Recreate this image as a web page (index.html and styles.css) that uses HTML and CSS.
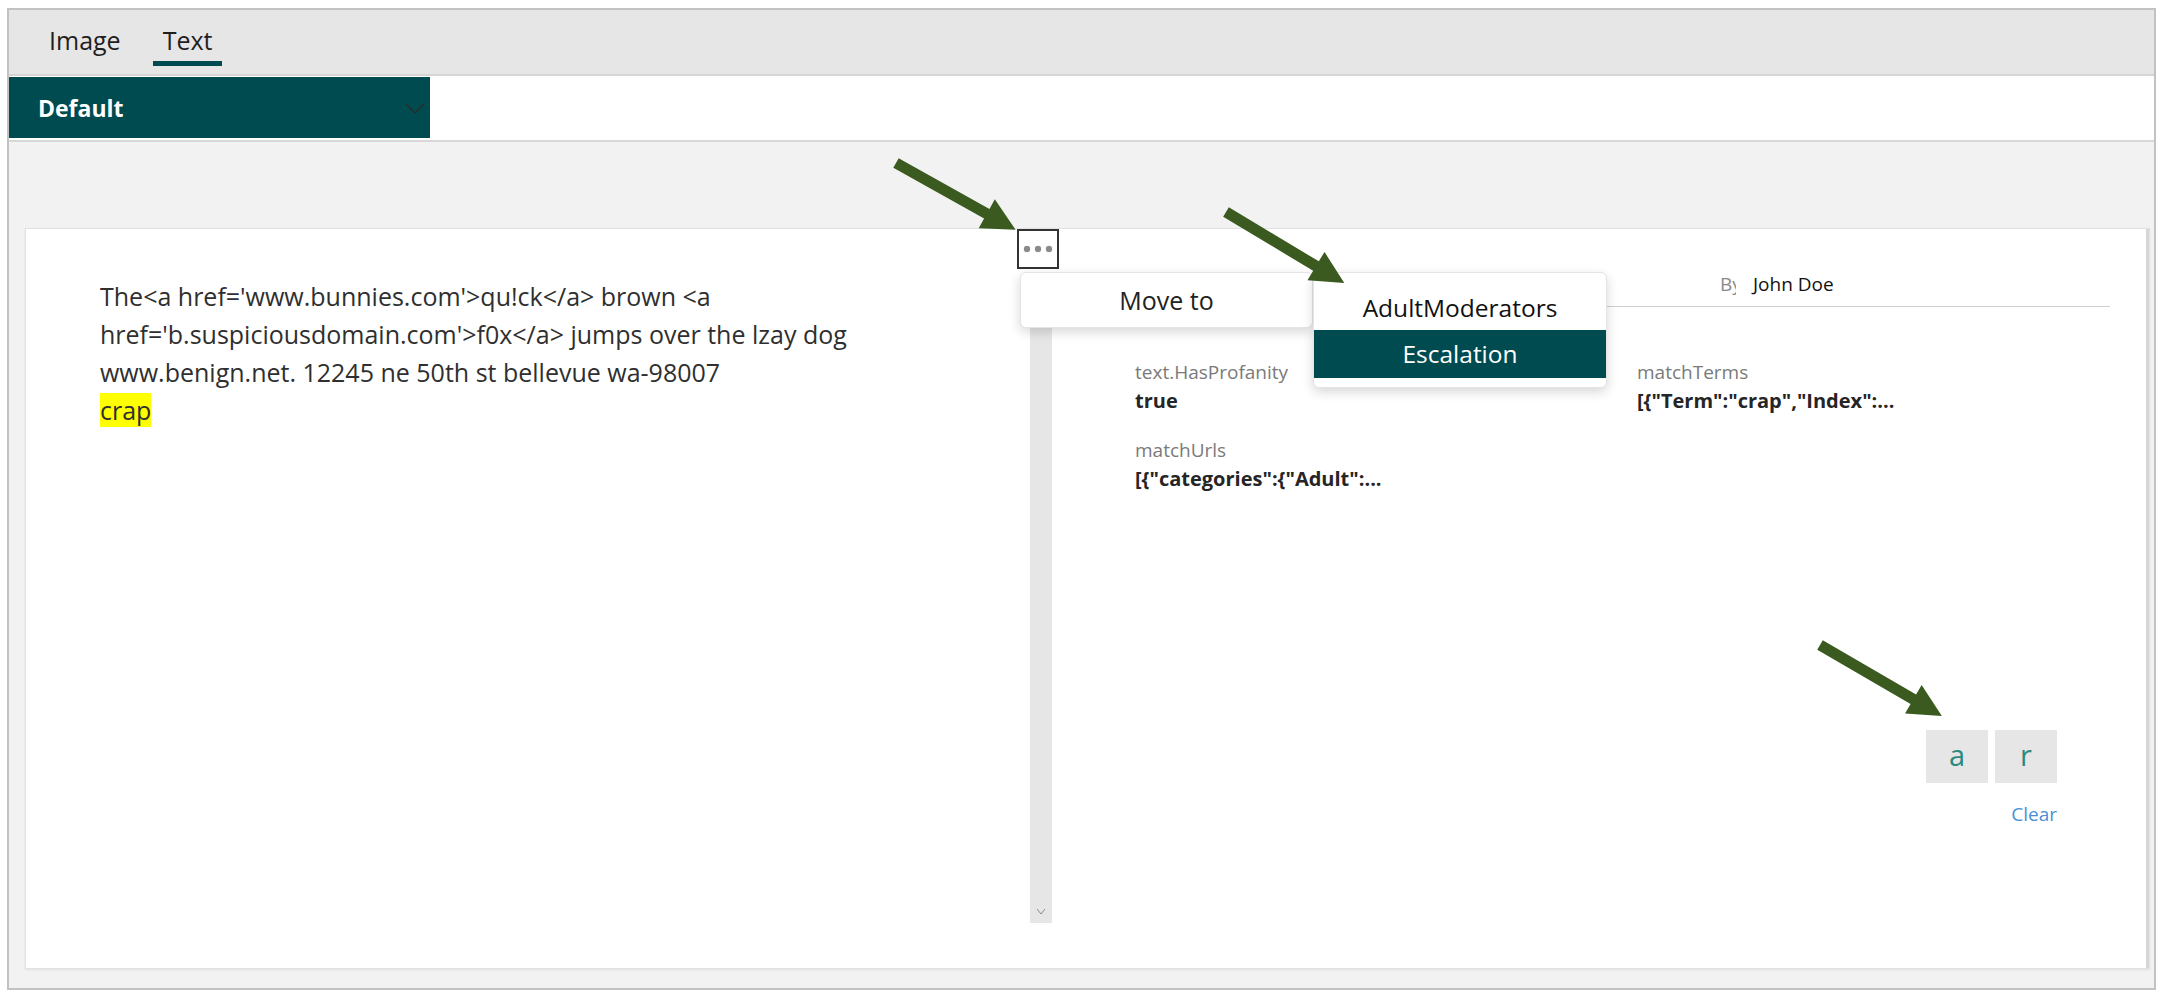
FILE: index.html
```html
<!DOCTYPE html>
<html lang="en">
<head>
<meta charset="utf-8">
<title>Review - Text</title>
<link rel="stylesheet" href="styles.css">
</head>
<body>
<div class="frame">
  <div class="tabs">
    <div class="tab">Image</div>
    <div class="tab active">Text</div>
  </div>
  <div class="filter-row">
    <div class="dropdown">
      <span class="dropdown-label">Default</span>
      <svg class="dropdown-chevron" width="20" height="11" viewBox="0 0 20 11"><polyline points="1,1 10,10 19,1" fill="none" stroke="#2a2a2a" stroke-width="1.3"/></svg>
    </div>
  </div>
  <div class="content">
    <div class="card">
      <div class="text-pane">
        <p class="doc">The&lt;a href='www.bunnies.com'&gt;qu!ck&lt;/a&gt; brown &lt;a<br>href='b.suspiciousdomain.com'&gt;f0x&lt;/a&gt; jumps over the lzay dog<br>www.benign.net. 12245 ne 50th st bellevue wa-98007<br><mark class="hl">crap</mark></p>
      </div>
      <div class="scrollbar">
        <svg class="scroll-chevron" width="10" height="7" viewBox="0 0 10 7"><polyline points="1,1 5,6 9,1" fill="none" stroke="#8a8a8a" stroke-width="1"/></svg>
      </div>
      <div class="detail-pane">
        <div class="detail-header">
          <span class="by">By</span><span class="author">John Doe</span>
        </div>
        <div class="fields">
          <div class="field">
            <div class="field-label">text.HasProfanity</div>
            <div class="field-value">true</div>
          </div>
          <div class="field">
            <div class="field-label">matchTerms</div>
            <div class="field-value">[{"Term":"crap","Index":...</div>
          </div>
          <div class="field">
            <div class="field-label">matchUrls</div>
            <div class="field-value">[{"categories":{"Adult":...</div>
          </div>
        </div>
        <div class="actions">
          <div class="tag-buttons">
            <div class="tag-btn">a</div>
            <div class="tag-btn">r</div>
          </div>
          <div class="clear">Clear</div>
        </div>
      </div>
      <div class="edge"></div>

      <div class="more-btn"><span class="dot"></span><span class="dot"></span><span class="dot"></span></div>
      <div class="menu menu-move">Move to</div>
      <div class="menu menu-sub">
        <div class="menu-item">AdultModerators</div>
        <div class="menu-item selected">Escalation</div>
      </div>
    </div>
  </div>
</div>
<svg class="annotations" width="2164" height="998" viewBox="0 0 2164 998">
  <g fill="#3a5a1f">
    <polygon transform="translate(896 163) rotate(29.2)" points="0,-5.5 104,-5.5 104,-16.5 137,0 104,16.5 104,5.5 0,5.5"/>
    <polygon transform="translate(1226 212) rotate(31)" points="0,-5.5 105,-5.5 105,-16.5 138,0 105,16.5 105,5.5 0,5.5"/>
    <polygon transform="translate(1820 645) rotate(30.2)" points="0,-5.5 108,-5.5 108,-16.5 141,0 108,16.5 108,5.5 0,5.5"/>
  </g>
</svg>
</body>
</html>
```

FILE: styles.css
```css
html, body {
  margin: 0;
  padding: 0;
  background: #ffffff;
}

body {
  font-family: "Open Sans", "Noto Sans", sans-serif;
  color: #222;
  width: 2164px;
  height: 998px;
  position: relative;
  overflow: hidden;
}

.frame {
  margin: 8px 0 0 7px;
  width: 2149px;
  height: 982px;
  box-sizing: border-box;
  border: 2px solid #c2c2c2;
  background: #f2f2f2;
  display: flex;
  flex-direction: column;
}

/* Tabs */
.tabs {
  height: 66px;
  flex: none;
  box-sizing: border-box;
  background: #e6e6e6;
  border-bottom: 2px solid #d5d5d5;
  display: flex;
  align-items: flex-start;
  gap: 22px;
  padding: 13px 0 0 30px;
}

.tab {
  font-size: 25px;
  line-height: 34px;
  padding: 0 10px 4px;
  border-bottom: 5px solid transparent;
  color: #1f1f1f;
}

.tab.active {
  border-bottom-color: #004b50;
}

/* Filter row */
.filter-row {
  flex: none;
  height: 66px;
  box-sizing: border-box;
  background: #ffffff;
  border-bottom: 2px solid #d8d8d8;
  padding-top: 1px;
}

.dropdown {
  width: 421px;
  height: 61px;
  background: #004b50;
  display: flex;
  align-items: center;
  justify-content: space-between;
  padding: 0 5px 0 29px;
  box-sizing: border-box;
}

.dropdown-label {
  color: #ffffff;
  font-weight: 700;
  font-size: 23px;
}

.dropdown-chevron {
  margin-top: 2px;
}

/* Content */
.content {
  flex: 1;
  display: flex;
  padding: 86px 4px 19px 16px;
  min-height: 0;
  min-width: 0;
}

.card {
  flex: 1;
  min-width: 0;
  position: relative;
  display: flex;
  background: #ffffff;
  border: 1px solid #e2e2e2;
  box-shadow: 0 1px 2px rgba(0, 0, 0, 0.08);
}

.text-pane {
  width: 1004px;
  flex: none;
  padding: 48px 0 0 74px;
  box-sizing: border-box;
}

.doc {
  margin: 0;
  font-size: 25px;
  line-height: 38px;
  color: #2f2f2f;
}

.hl {
  background: #ffff00;
  color: #2f2f2f;
}

.scrollbar {
  width: 22px;
  flex: none;
  margin: 56px 0 45px;
  background: #e6e6e6;
  display: flex;
  align-items: flex-end;
  justify-content: center;
  padding-bottom: 8px;
  box-sizing: border-box;
}

.detail-pane {
  flex: 1;
  min-width: 0;
  display: flex;
  flex-direction: column;
  padding: 33px 36px 0 43px;
}

.detail-header {
  height: 44px;
  border-bottom: 1px solid #cfcfcf;
  display: flex;
  align-items: center;
  padding-left: 625px;
  font-size: 19px;
}

.by {
  display: inline-block;
  width: 16px;
  overflow: hidden;
  color: #8a8a8a;
  white-space: nowrap;
}

.author {
  margin-left: 17px;
  color: #111;
}

.fields {
  margin-top: 50px;
  padding-left: 40px;
  display: grid;
  grid-template-columns: 502px 1fr;
  row-gap: 20px;
}

.field-label {
  font-size: 19px;
  line-height: 30px;
  color: #7a7a7a;
}

.field-value {
  font-size: 20px;
  line-height: 28px;
  font-weight: 700;
  color: #252525;
}

.actions {
  align-self: flex-end;
  margin: 237px 53px 0 0;
  display: flex;
  flex-direction: column;
  align-items: flex-end;
}

.tag-buttons {
  display: flex;
  gap: 7px;
}

.tag-btn {
  width: 62px;
  height: 53px;
  background: #e6e6e6;
  color: #2a8a80;
  font-size: 29px;
  line-height: 50px;
  text-align: center;
}

.clear {
  margin-top: 18px;
  font-size: 19px;
  line-height: 26px;
  color: #4a8fd6;
}

.edge {
  width: 3px;
  flex: none;
  background: #d6d6d6;
}

/* Overlays */
.more-btn {
  position: absolute;
  left: 991px;
  top: 0;
  width: 42px;
  height: 40px;
  box-sizing: border-box;
  border: 2px solid #333;
  background: #fff;
  display: flex;
  align-items: center;
  justify-content: center;
  gap: 5px;
}

.dot {
  width: 6px;
  height: 6px;
  border-radius: 50%;
  background: #8a8a8a;
  box-shadow: 0 0 1px #8a8a8a;
}

.menu {
  position: absolute;
  top: 43px;
  background: #fff;
  box-sizing: border-box;
  border: 1px solid #e4e4e4;
  border-radius: 6px;
  box-shadow: 0 4px 12px rgba(0, 0, 0, 0.16);
}

.menu-move {
  left: 994px;
  width: 293px;
  height: 56px;
  font-size: 25px;
  line-height: 54px;
  text-align: center;
  color: #222;
}

.menu-sub {
  left: 1287px;
  width: 294px;
  height: 116px;
  padding-bottom: 10px;
  overflow: hidden;
}

.menu-item {
  font-size: 24.5px;
  text-align: center;
  color: #111;
  line-height: 33px;
  padding: 18px 0 6px;
}

.menu-item.selected {
  background: #004b50;
  color: #ffffff;
  line-height: 48px;
  padding: 0;
}

.annotations {
  position: absolute;
  left: 0;
  top: 0;
  pointer-events: none;
}
```
